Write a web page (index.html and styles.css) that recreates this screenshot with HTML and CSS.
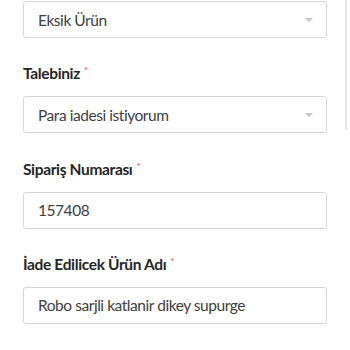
FILE: index.html
```html
<!DOCTYPE html>
<html lang="tr">
<head>
<meta charset="utf-8">
<link rel="stylesheet" href="styles.css">
</head>
<body>
<div class="form">
  <div class="group first">
    <div class="field select">
      <span class="value">Eksik Ürün</span>
      <span class="caret"></span>
    </div>
  </div>
  <div class="group">
    <label class="label">Talebiniz<span class="req">*</span></label>
    <div class="field select">
      <span class="value">Para iadesi istiyorum</span>
      <span class="caret"></span>
    </div>
  </div>
  <div class="group">
    <label class="label">Sipariş Numarası<span class="req">*</span></label>
    <div class="field">
      <span class="value">157408</span>
    </div>
  </div>
  <div class="group">
    <label class="label">İade Edilicek Ürün Adı<span class="req">*</span></label>
    <div class="field">
      <span class="value">Robo sarjli katlanir dikey supurge</span>
    </div>
  </div>
</div>
<div class="scrollbar"></div>
</body>
</html>
```
FILE: styles.css
```css
html, body {
  margin: 0;
  padding: 0;
  background: #ffffff;
}
body {
  width: 350px;
  height: 350px;
  overflow: hidden;
  position: relative;
  font-family: Lato, "Open Sans", sans-serif;
}
.form {
  padding: 1px 0 0 23px;
  width: 304px;
}
.group {
  margin-top: 25.33px;
}
.group.first {
  margin-top: 0;
}
.label {
  display: block;
  font-weight: 700;
  font-size: 15.5px;
  line-height: 20px;
  height: 20px;
  color: #262626;
  letter-spacing: -0.35px;
  margin-bottom: 13px;
}
.req {
  color: #e8505b;
  font-size: 10px;
  font-weight: 400;
  line-height: 0;
  vertical-align: 5px;
  margin-left: 4px;
}
.field {
  box-sizing: border-box;
  height: 37px;
  border: 1px solid #d6d6d6;
  border-radius: 3px;
  display: flex;
  align-items: center;
  padding: 0 13px 0 14px;
  font-size: 15.5px;
  letter-spacing: -0.45px;
  color: #404040;
}
.value {
  flex: 1;
}
.caret {
  width: 0;
  height: 0;
  border-left: 4px solid transparent;
  border-right: 4px solid transparent;
  border-top: 4px solid #c4c4c4;
}
.scrollbar {
  position: absolute;
  left: 345px;
  top: 0;
  width: 2px;
  height: 130px;
  background: #e6e6e6;
}
```
